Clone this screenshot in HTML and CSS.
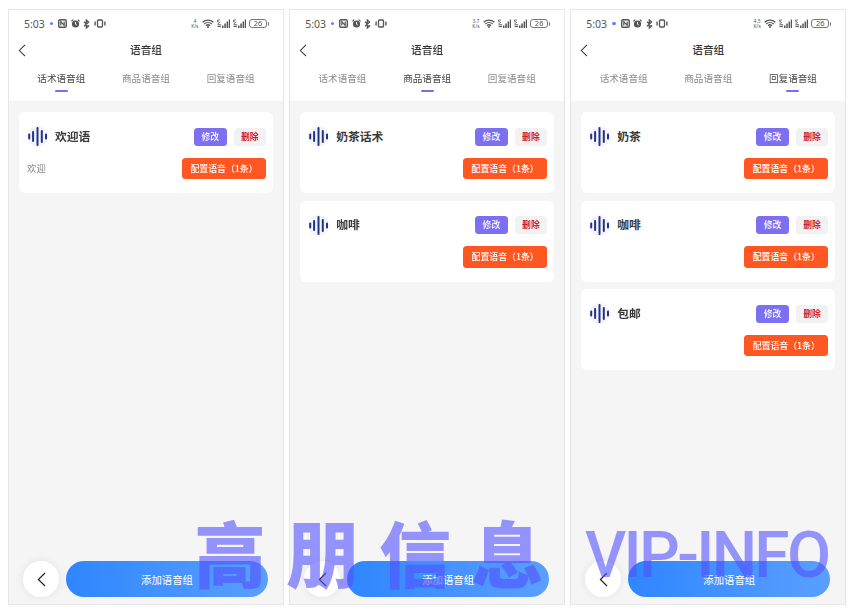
FILE: index.html
```html
<!DOCTYPE html>
<html lang="zh-CN">
<head>
<meta charset="utf-8">
<title>语音组</title>
<link rel="stylesheet" href="styles.css">
</head>
<body>
<svg class="defs" width="0" height="0" aria-hidden="true">
  <symbol id="i-nfc" viewBox="0 0 9 9"><rect x=".7" y=".7" width="7.6" height="7.6" rx="1.4" fill="none" stroke="currentColor" stroke-width="1.4"/><path d="M2.8 6.6V2.6L6.2 6.4V2.4" fill="none" stroke="currentColor" stroke-width="1.2"/></symbol>
  <symbol id="i-alarm" viewBox="0 0 9 9"><circle cx="4.5" cy="5" r="3.6" fill="currentColor"/><path d="M.4 2.4 2.2.6M8.6 2.4 6.8.6" stroke="currentColor" stroke-width="1.3"/><path d="M4.5 3v2.2l1.4.8" fill="none" stroke="#fff" stroke-width=".9"/></symbol>
  <symbol id="i-bt" viewBox="0 0 7 10"><path d="M1 2.8 5.6 7 3.3 9V1L5.6 3 1 7.2" fill="none" stroke="currentColor" stroke-width="1.3"/></symbol>
  <symbol id="i-vib" viewBox="0 0 13 9"><rect x="3.8" y=".7" width="5.4" height="7.6" rx="1" fill="none" stroke="currentColor" stroke-width="1.4"/><path d="M1.2 2.4v4.2M11.8 2.4v4.2" stroke="currentColor" stroke-width="1.5"/></symbol>
  <symbol id="i-wifi" viewBox="0 0 12 9"><path d="M.6 3.2a7.8 7.8 0 0 1 10.8 0M2.3 5a5.3 5.3 0 0 1 7.4 0M4 6.7a2.9 2.9 0 0 1 4 0" fill="none" stroke="currentColor" stroke-width="1.2"/><circle cx="6" cy="8" r="1" fill="currentColor"/></symbol>
  <symbol id="i-sig" viewBox="0 0 13 9"><path d="M5 9V6.5h1.5V9zM7.3 9V4.5h1.5V9zM9.6 9V2.5h1.5V9zM11.8 9V.5H13V9z" fill="currentColor"/><path d="M.4 1h2.4M.7 1v1.8c1.6-.3 2 .5 1.6 1.2-.3.4-1 .5-1.8.2" fill="none" stroke="currentColor" stroke-width=".8"/><path d="M.5 5.8h3.6M.5 7.6h3.6" stroke="currentColor" stroke-width="1"/></symbol>
  <symbol id="i-wave" viewBox="0 0 21 21"><circle cx="10.5" cy="10.5" r="10.5" fill="#f4f5f9"/><g fill="#22328a"><rect x="1.2" y="7.5" width="2" height="6" rx=".9"/><rect x="5.1" y="5" width="2" height="11" rx=".9"/><rect x="9.5" y="1" width="2" height="19" rx=".9"/><rect x="13.8" y="4" width="2" height="13" rx=".9"/><rect x="18" y="7.5" width="2" height="6" rx=".9"/></g></symbol>
  <symbol id="i-back" viewBox="0 0 9 15"><path d="M8 1 1.4 7.5 8 14" fill="none" stroke="currentColor" stroke-width="1.2"/></symbol>
</svg>

<main class="phones">

  <section class="phone">
    <div class="status">
      <div class="status-left">
        <span class="time">5:03</span><span class="dot"></span>
        <svg class="ic ic-9"><use href="#i-nfc"/></svg>
        <svg class="ic ic-9"><use href="#i-alarm"/></svg>
        <svg class="ic ic-bt"><use href="#i-bt"/></svg>
        <svg class="ic ic-vib"><use href="#i-vib"/></svg>
      </div>
      <div class="status-right">
        <span class="speed">4<br>K/s</span>
        <svg class="ic ic-wifi"><use href="#i-wifi"/></svg>
        <svg class="ic ic-sig"><use href="#i-sig"/></svg>
        <svg class="ic ic-sig"><use href="#i-sig"/></svg>
        <span class="batt">26</span>
      </div>
    </div>
    <header class="title-bar">
      <svg class="title-back"><use href="#i-back"/></svg>
      <h1 class="title">语音组</h1>
    </header>
    <nav class="tabs">
      <span class="tab tab-active">话术语音组</span>
      <span class="tab">商品语音组</span>
      <span class="tab">回复语音组</span>
    </nav>
    <div class="content">
      <div class="cards">
        <article class="card">
          <div class="card-top">
            <svg class="wave"><use href="#i-wave"/></svg>
            <span class="card-name">欢迎语</span>
            <button class="btn btn-edit">修改</button>
            <button class="btn btn-del">删除</button>
          </div>
          <div class="card-bottom">
            <span class="desc">欢迎</span>
            <button class="btn-config">配置语音（1条）</button>
          </div>
        </article>
      </div>
      <footer class="foot">
        <span class="round"><svg class="round-ic"><use href="#i-back"/></svg></span>
        <button class="add">添加语音组</button>
      </footer>
    </div>
  </section>

  <section class="phone">
    <div class="status">
      <div class="status-left">
        <span class="time">5:03</span><span class="dot"></span>
        <svg class="ic ic-9"><use href="#i-nfc"/></svg>
        <svg class="ic ic-9"><use href="#i-alarm"/></svg>
        <svg class="ic ic-bt"><use href="#i-bt"/></svg>
        <svg class="ic ic-vib"><use href="#i-vib"/></svg>
      </div>
      <div class="status-right">
        <span class="speed">3.7<br>K/s</span>
        <svg class="ic ic-wifi"><use href="#i-wifi"/></svg>
        <svg class="ic ic-sig"><use href="#i-sig"/></svg>
        <svg class="ic ic-sig"><use href="#i-sig"/></svg>
        <span class="batt">26</span>
      </div>
    </div>
    <header class="title-bar">
      <svg class="title-back"><use href="#i-back"/></svg>
      <h1 class="title">语音组</h1>
    </header>
    <nav class="tabs">
      <span class="tab">话术语音组</span>
      <span class="tab tab-active">商品语音组</span>
      <span class="tab">回复语音组</span>
    </nav>
    <div class="content">
      <div class="cards">
        <article class="card">
          <div class="card-top">
            <svg class="wave"><use href="#i-wave"/></svg>
            <span class="card-name">奶茶话术</span>
            <button class="btn btn-edit">修改</button>
            <button class="btn btn-del">删除</button>
          </div>
          <div class="card-bottom">
            <span class="desc"></span>
            <button class="btn-config">配置语音（1条）</button>
          </div>
        </article>
        <article class="card">
          <div class="card-top">
            <svg class="wave"><use href="#i-wave"/></svg>
            <span class="card-name">咖啡</span>
            <button class="btn btn-edit">修改</button>
            <button class="btn btn-del">删除</button>
          </div>
          <div class="card-bottom">
            <span class="desc"></span>
            <button class="btn-config">配置语音（1条）</button>
          </div>
        </article>
      </div>
      <footer class="foot">
        <span class="round"><svg class="round-ic"><use href="#i-back"/></svg></span>
        <button class="add">添加语音组</button>
      </footer>
    </div>
  </section>

  <section class="phone">
    <div class="status">
      <div class="status-left">
        <span class="time">5:03</span><span class="dot"></span>
        <svg class="ic ic-9"><use href="#i-nfc"/></svg>
        <svg class="ic ic-9"><use href="#i-alarm"/></svg>
        <svg class="ic ic-bt"><use href="#i-bt"/></svg>
        <svg class="ic ic-vib"><use href="#i-vib"/></svg>
      </div>
      <div class="status-right">
        <span class="speed">4.5<br>K/s</span>
        <svg class="ic ic-wifi"><use href="#i-wifi"/></svg>
        <svg class="ic ic-sig"><use href="#i-sig"/></svg>
        <svg class="ic ic-sig"><use href="#i-sig"/></svg>
        <span class="batt">26</span>
      </div>
    </div>
    <header class="title-bar">
      <svg class="title-back"><use href="#i-back"/></svg>
      <h1 class="title">语音组</h1>
    </header>
    <nav class="tabs">
      <span class="tab">话术语音组</span>
      <span class="tab">商品语音组</span>
      <span class="tab tab-active">回复语音组</span>
    </nav>
    <div class="content">
      <div class="cards">
        <article class="card">
          <div class="card-top">
            <svg class="wave"><use href="#i-wave"/></svg>
            <span class="card-name">奶茶</span>
            <button class="btn btn-edit">修改</button>
            <button class="btn btn-del">删除</button>
          </div>
          <div class="card-bottom">
            <span class="desc"></span>
            <button class="btn-config">配置语音（1条）</button>
          </div>
        </article>
        <article class="card">
          <div class="card-top">
            <svg class="wave"><use href="#i-wave"/></svg>
            <span class="card-name">咖啡</span>
            <button class="btn btn-edit">修改</button>
            <button class="btn btn-del">删除</button>
          </div>
          <div class="card-bottom">
            <span class="desc"></span>
            <button class="btn-config">配置语音（1条）</button>
          </div>
        </article>
        <article class="card">
          <div class="card-top">
            <svg class="wave"><use href="#i-wave"/></svg>
            <span class="card-name">包邮</span>
            <button class="btn btn-edit">修改</button>
            <button class="btn btn-del">删除</button>
          </div>
          <div class="card-bottom">
            <span class="desc"></span>
            <button class="btn-config">配置语音（1条）</button>
          </div>
        </article>
      </div>
      <footer class="foot">
        <span class="round"><svg class="round-ic"><use href="#i-back"/></svg></span>
        <button class="add">添加语音组</button>
      </footer>
    </div>
  </section>

</main>

<div class="wm wm-cn">高朋信息</div>
<div class="wm wm-en">VIP-INFO</div>
</body>
</html>
```

FILE: styles.css
```css
* { box-sizing: border-box; }

html, body {
  margin: 0;
  height: 100%;
  background: #fff;
  overflow: hidden;
}

body {
  font-family: "Noto Sans CJK SC", "Noto Sans", sans-serif;
  color: #333;
}

.defs { position: absolute; }

.phones {
  display: flex;
  gap: 5.15px;
  padding: 9px 0 0 8px;
  filter: blur(0.3px);
}

.phone {
  width: 276px;
  height: 596px;
  border: 1px solid #e6e6e6;
  background: #fff;
  display: flex;
  flex-direction: column;
  flex: none;
}

/* status bar */
.status {
  height: 26px;
  padding: 1px 16px 0 15px;
  display: flex;
  align-items: center;
  justify-content: space-between;
  color: #555;
}

.status-left,
.status-right {
  display: flex;
  align-items: center;
}

.time { font-size: 10.5px; line-height: 12px; margin-right: 5px; font-family: "Noto Sans", sans-serif; }
.dot { width: 3.5px; height: 3.5px; border-radius: 50%; background: #6e7cf0; margin-right: 5px; }
.ic { display: block; flex: none; color: #555; }
.ic-9 { width: 9px; height: 9px; margin-right: 3.5px; }
.ic-bt { width: 7px; height: 10px; margin-right: 3.5px; }
.ic-vib { width: 12px; height: 9px; }
.ic-wifi { width: 12px; height: 9px; margin-right: 3.5px; }
.ic-sig { width: 13px; height: 9px; margin-right: 3px; }

.speed {
  font-size: 5px;
  line-height: 5px;
  text-align: center;
  margin-right: 3px;
  font-family: "Noto Sans", sans-serif;
}

.batt {
  width: 18px;
  height: 9px;
  border: 1px solid #777;
  border-radius: 3px;
  font-size: 7.5px;
  line-height: 7px;
  text-align: center;
  position: relative;
  font-family: "Noto Sans", sans-serif;
}

.batt::after {
  content: "";
  position: absolute;
  right: -3px;
  top: 1.5px;
  width: 1.5px;
  height: 4px;
  background: #777;
  border-radius: 0 1px 1px 0;
}

/* title */
.title-bar {
  height: 28px;
  padding-bottom: 2px;
  display: flex;
  align-items: center;
  justify-content: center;
  position: relative;
}

.title-back {
  position: absolute;
  left: 9px;
  top: 8px;
  width: 8px;
  height: 13px;
  color: #333;
}

.title {
  margin: 0;
  font-size: 10.7px;
  font-weight: 500;
  color: #333;
}

/* tabs */
.tabs {
  height: 37px;
  padding: 0 10px;
  display: grid;
  grid-template-columns: repeat(3, 1fr);
}

.tab {
  position: relative;
  text-align: center;
  font-size: 9.6px;
  line-height: 14px;
  padding-top: 7px;
  color: #8a8a8a;
}

.tab-active { color: #444; }

.tab-active::after {
  content: "";
  position: absolute;
  left: 50%;
  top: 26px;
  width: 13px;
  height: 2px;
  margin-left: -6.5px;
  background: #7a6cf2;
  border-radius: 1px;
}

/* content */
.content {
  flex: 1;
  background: #f5f5f5;
  padding: 11px 10px 7px;
  display: flex;
  flex-direction: column;
  justify-content: space-between;
}

.cards {
  display: flex;
  flex-direction: column;
  gap: 7.5px;
}

.card {
  height: 81px;
  background: #fff;
  border-radius: 6px;
  padding: 15.5px 7px 14px 8px;
  display: flex;
  flex-direction: column;
  justify-content: space-between;
}

.card-top {
  display: flex;
  align-items: center;
  height: 18px;
}

.wave {
  width: 21px;
  height: 21px;
  flex: none;
  margin-right: 7px;
}

.card-name {
  flex: 1;
  font-size: 11.8px;
  line-height: 16px;
  padding-bottom: 2px;
  font-weight: 700;
  color: #3a3a3a;
}

.btn {
  width: 32.5px;
  height: 18px;
  border: 0;
  padding: 0;
  border-radius: 3.5px;
  font: inherit;
  font-size: 8.8px;
  font-weight: 500;
  line-height: 18px;
  text-align: center;
}

.btn-edit { background: #7d6ff2; color: #fff; margin-right: 7px; }
.btn-del { background: #f2f2f2; color: #cf1f2e; font-weight: 700; }

.card-bottom {
  display: flex;
  align-items: center;
  justify-content: space-between;
  height: 21.5px;
}

.desc {
  font-size: 9.4px;
  color: #888;
}

.btn-config {
  width: 84px;
  height: 21.5px;
  border: 0;
  padding: 0;
  border-radius: 3.5px;
  background: #ff5722;
  color: #fff;
  font: inherit;
  font-size: 8.9px;
  font-weight: 500;
  text-align: center;
}

/* footer */
.foot {
  display: flex;
  align-items: center;
  gap: 7px;
  padding: 0 5px 0 4px;
}

.round {
  width: 36px;
  height: 36px;
  flex: none;
  border-radius: 50%;
  background: #fff;
  box-shadow: 0 0 8px rgba(0, 0, 0, 0.08);
  display: flex;
  align-items: center;
  justify-content: center;
}

.round-ic {
  width: 9px;
  height: 15px;
  color: #222;
}

.add {
  flex: 1;
  height: 36px;
  border: 0;
  padding: 0;
  border-radius: 18px;
  background: linear-gradient(90deg, #2f86ff, #5a9fff);
  color: #fff;
  font: inherit;
  font-size: 10.4px;
  text-align: center;
}

/* watermark laid over the whole picture */
.wm {
  position: absolute;
  color: rgba(84, 80, 255, 0.6);
  white-space: nowrap;
  pointer-events: none;
}

.wm-cn {
  left: 194px;
  top: 499px;
  font-size: 72px;
  line-height: 104px;
  letter-spacing: 20.5px;
  font-weight: 900;
}

.wm-en {
  left: 585px;
  top: 510px;
  font-family: Roboto, sans-serif;
  font-size: 64px;
  line-height: 92px;
  letter-spacing: -2.7px;
  font-weight: 500;
}
```
